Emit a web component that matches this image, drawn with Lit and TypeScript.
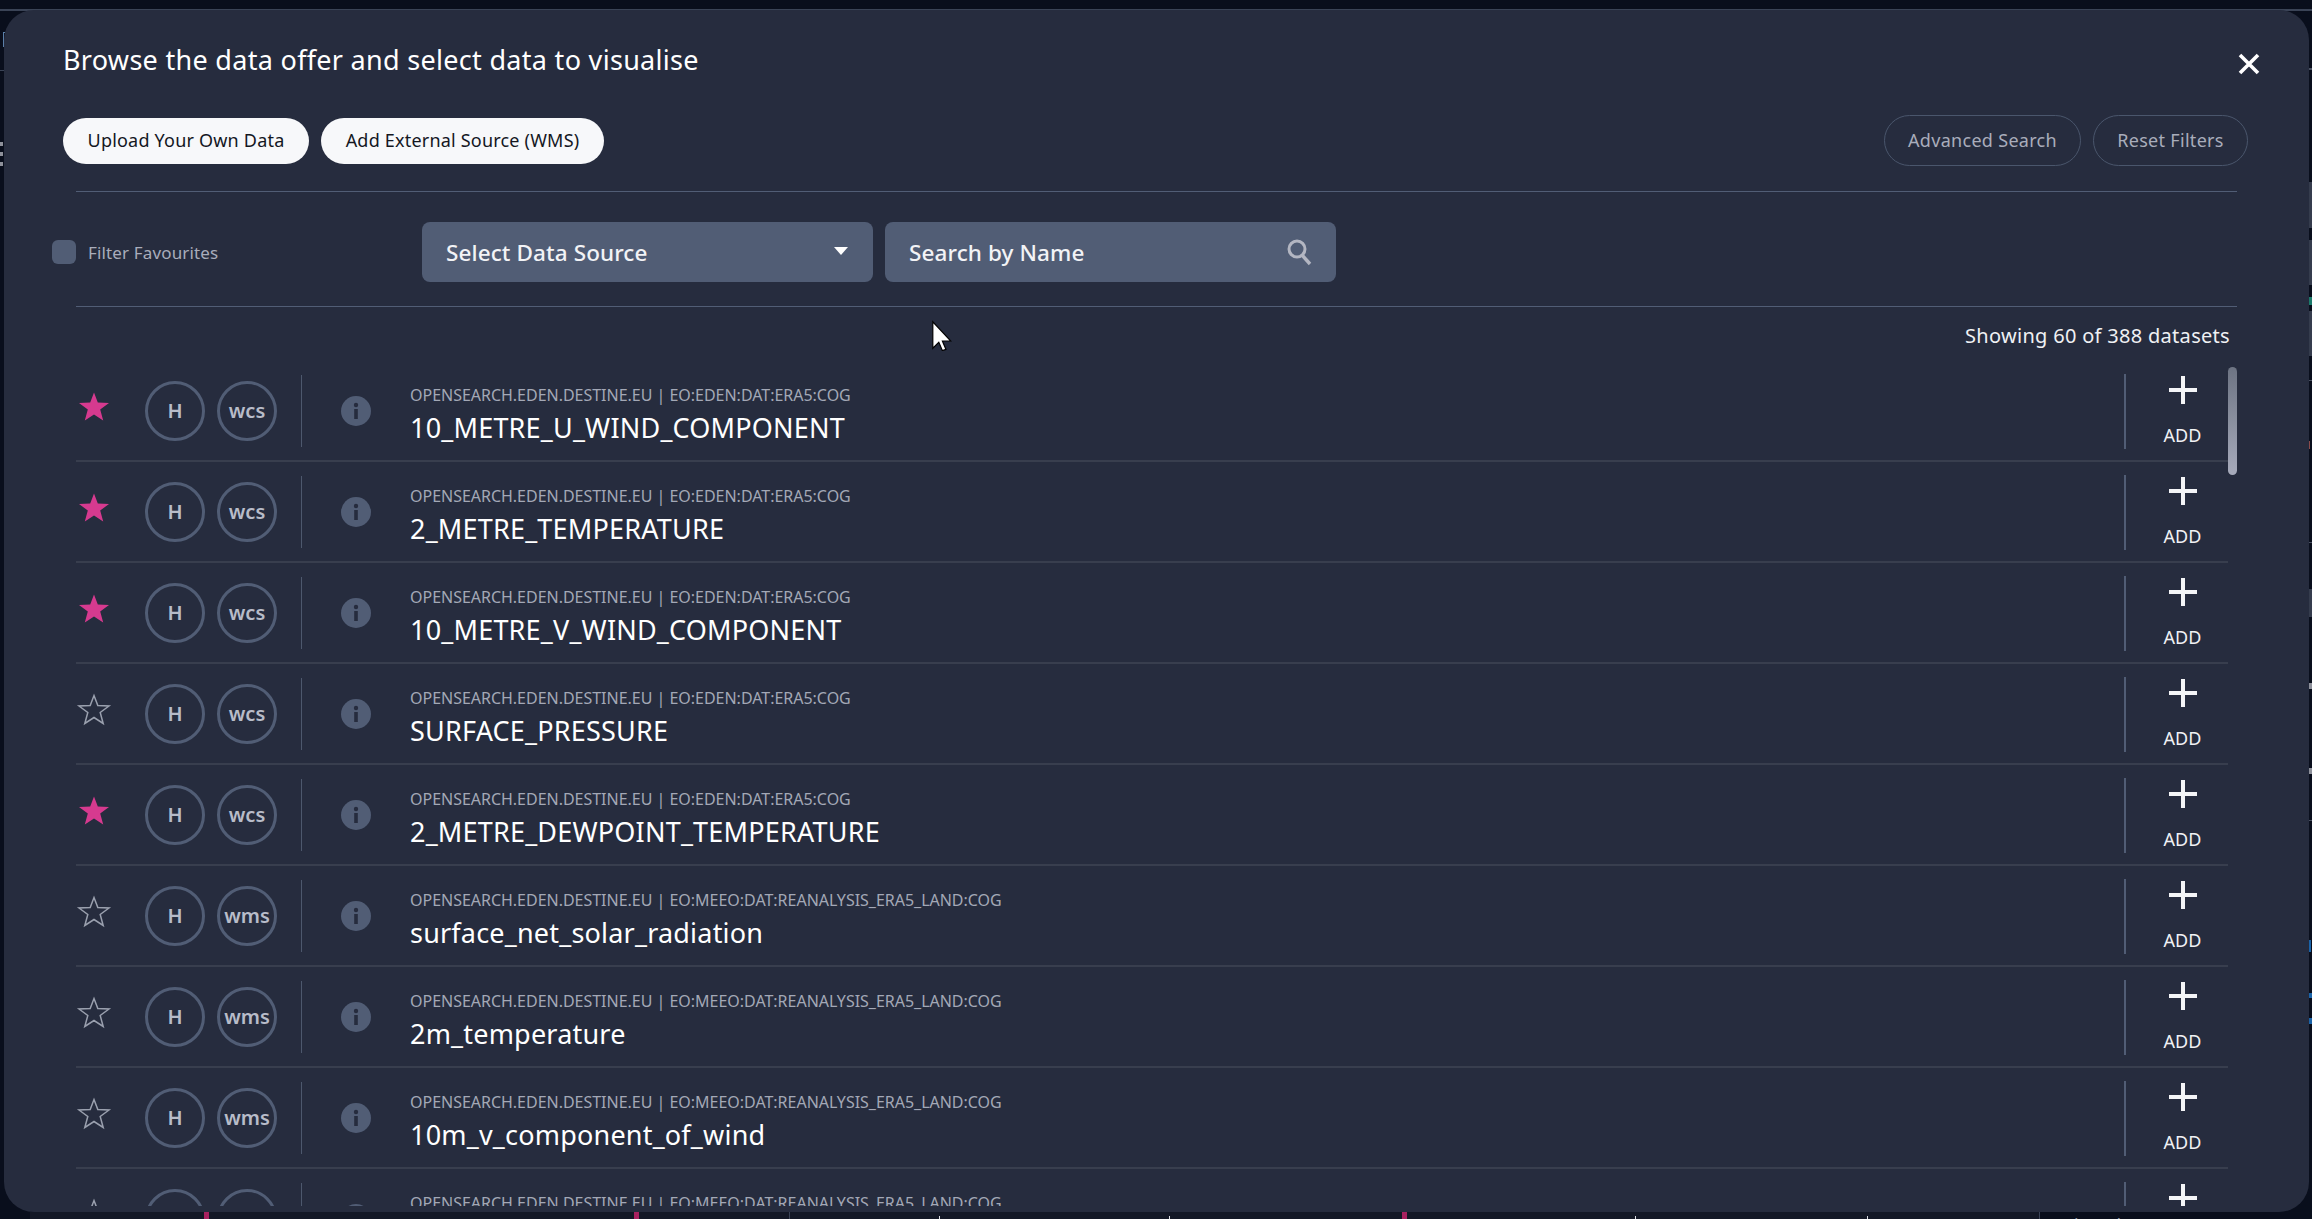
import { LitElement, html, css, svg } from "lit";
import { customElement } from "lit/decorators.js";

const ERA = "OPENSEARCH.EDEN.DESTINE.EU | EO:EDEN:DAT:ERA5:COG";
const LAND = "OPENSEARCH.EDEN.DESTINE.EU | EO:MEEO:DAT:REANALYSIS_ERA5_LAND:COG";
const rows = [
  { src: ERA, name: "10_METRE_U_WIND_COMPONENT", fav: true, kind: "wcs" },
  { src: ERA, name: "2_METRE_TEMPERATURE", fav: true, kind: "wcs" },
  { src: ERA, name: "10_METRE_V_WIND_COMPONENT", fav: true, kind: "wcs" },
  { src: ERA, name: "SURFACE_PRESSURE", fav: false, kind: "wcs" },
  { src: ERA, name: "2_METRE_DEWPOINT_TEMPERATURE", fav: true, kind: "wcs" },
  { src: LAND, name: "surface_net_solar_radiation", fav: false, kind: "wms" },
  { src: LAND, name: "2m_temperature", fav: false, kind: "wms" },
  { src: LAND, name: "10m_v_component_of_wind", fav: false, kind: "wms" },
  { src: LAND, name: "10m_u_component_of_wind", fav: false, kind: "wms" },
];

const bits: [number, number, number, number, string][] = [
  [0, 9, 2312, 2, "#3a4356"], [0, 70, 4, 1, "#3a4356"],
  [0, 142, 3, 4, "#8d909a"], [0, 152, 3, 4, "#8d909a"], [0, 162, 3, 4, "#8d909a"],
  [2309, 68, 3, 2, "#4a5162"], [2309, 182, 3, 46, "#353c4d"], [2309, 240, 3, 45, "#353c4d"],
  [2309, 297, 3, 8, "#1b7a6b"], [2309, 311, 3, 45, "#353c4d"], [2309, 380, 3, 1, "#4a5162"],
  [2309, 441, 1, 8, "#8a4a4a"], [2309, 542, 3, 1, "#4a5162"], [2309, 589, 3, 28, "#353c4d"],
  [2309, 683, 3, 6, "#8d909a"], [2309, 768, 3, 6, "#8d909a"], [2309, 820, 3, 1, "#4a5162"],
  [2309, 940, 2, 12, "#1a63a8"], [2309, 993, 3, 5, "#1a63a8"], [2309, 1018, 3, 6, "#1a63a8"],
  [30, 1212, 2009, 7, "#131826"], [204, 1212, 5, 7, "#a8215f"], [634, 1212, 5, 7, "#a8215f"],
  [1402, 1212, 5, 7, "#a8215f"], [789, 1212, 1, 7, "#3a4356"], [2039, 1212, 1, 7, "#3a4356"],
  [939, 1216, 1, 3, "#d8dae0"], [1169, 1216, 1, 3, "#d8dae0"], [1635, 1216, 1, 3, "#d8dae0"],
  [1867, 1216, 1, 3, "#d8dae0"],
];

const starPath = "M15 1.5 L18.8 11.5 L30 12 L21.2 18.5 L24.2 29.5 L15 23.5 L5.8 29.5 L8.8 18.5 L0 12 L11.2 11.5 Z";

@customElement("app-root")
export class AppRoot extends LitElement {
  static styles = css`
    :host { display: block; position: relative; width: 2312px; height: 1219px; overflow: hidden;
      background: #090e1c; font-family: "Noto Sans", sans-serif; color: #fff; }
    .bit { position: absolute; }
    .bracket { position: absolute; left: 3px; top: 32px; width: 5px; height: 13px; border: 1px solid #5b7fa8; border-right: 0; }
    .minval { position: absolute; left: 2057px; top: 1214px; font-size: 18px; line-height: 22px; letter-spacing: 0.6px; color: #8d93a3; white-space: nowrap; }
    .modal { position: relative; box-sizing: border-box; margin: 10px 3px 0 4px; height: 1202px; border-radius: 30px;
      background: #262c3e; overflow: hidden; display: flex; flex-direction: column; padding-bottom: 6px; }
    .head { height: 105px; flex: none; display: flex; justify-content: space-between; align-items: center;
      padding: 0 49px 0 59px; box-sizing: border-box; }
    .title { font-size: 27px; line-height: 34px; margin-top: -6px; letter-spacing: 0.3px; }
    .close { width: 22px; height: 22px; display: block; margin-top: 2px; }
    .actions { height: 51px; flex: none; display: flex; justify-content: space-between; align-items: center; padding: 0 61px 0 59px; }
    .group { display: flex; gap: 12px; }
    .pill { height: 46px; box-sizing: border-box; border-radius: 23px; background: #f7f8fa; color: #14171f; padding-bottom: 2px;
      font-size: 18px; letter-spacing: 0.2px; display: flex; align-items: center; justify-content: center; white-space: nowrap; }
    .p1 { width: 246px; } .p2 { width: 283px; }
    .ghost { height: 51px; border-radius: 26px; border: 1px solid #4a566c; background: none; color: #a9adbb; letter-spacing: 0.3px; }
    .g1 { width: 197px; } .g2 { width: 155px; }
    .rule { height: 1px; flex: none; margin: 25px 72px 0 72px; background: #515d75; }
    .filters { height: 114px; box-sizing: border-box; flex: none; display: flex; align-items: center; padding: 6px 0 0 48px; }
    .fav { width: 370px; flex: none; display: flex; align-items: center; gap: 12px; font-size: 17px; color: #a9adbb; letter-spacing: 0.15px; }
    .check { width: 24px; height: 24px; border-radius: 6px; background: #515d75; }
    .field { width: 451px; height: 60px; box-sizing: border-box; border-radius: 8px; background: #515d75; display: flex;
      align-items: center; justify-content: space-between; padding: 0 24px; font-size: 22.5px; font-weight: 500; letter-spacing: 0.1px; color: #f2f3f6; }
    .field + .field { margin-left: 12px; }
    .tri { width: 14px; height: 8px; display: block; margin: -3px 1px 0 0; }
    .mag { width: 28px; height: 28px; display: block; margin-right: -1px; }
    .rule2 { margin-top: 0; }
    .count { height: 53px; flex: none; box-sizing: border-box; padding: 16px 79px 0 0; text-align: right; font-size: 20px; line-height: 26px; color: #f0f1f4; letter-spacing: 0.3px; }
    .listwrap { position: relative; flex: 1; margin: 1px 72px 0 72px; overflow: hidden; }
    .row { height: 101px; box-sizing: border-box; margin-right: 9px; border-bottom: 2px solid #383e4e; display: flex; align-items: center; }
    .star { width: 30px; height: 30px; display: block; flex: none; margin: -10px 36px 0 3px; overflow: visible; }
    .badge { width: 60px; height: 60px; box-sizing: border-box; flex: none; border: 3px solid #515d75; border-radius: 50%; display: flex;
      align-items: center; justify-content: center; color: #b8bcc9; font-weight: 600; font-size: 20px; padding-bottom: 1px; }
    .badge + .badge { margin-left: 12px; }
    .vr { width: 1px; height: 72px; flex: none; background: #4d586d; margin: 1px 39px 0 24px; }
    .info { width: 30px; height: 30px; flex: none; display: block; margin: 1px 39px 0 0; }
    .text { flex: 1; min-width: 0; margin-top: 9px; }
    .src { font-size: 16px; line-height: 22px; color: #a3a8b6; letter-spacing: -0.02px; white-space: nowrap; }
    .name { font-size: 27px; line-height: 36px; margin-top: 4px; color: #fff; letter-spacing: 0.2px; white-space: nowrap; }
    .add { width: 104px; height: 75px; flex: none; box-sizing: border-box; border-left: 2px solid #515d75; padding-left: 11px; margin-top: 1px;
      display: flex; flex-direction: column; align-items: center; }
    .plus { width: 28px; height: 28px; display: block; margin-top: 2px; }
    .addl { font-size: 18px; line-height: 24px; margin-top: 19px; color: #f0f1f4; }
    .thumb { position: absolute; right: 0; top: 6px; width: 9px; height: 108px; border-radius: 5px; background: linear-gradient(#6d7483, #a7abbb); }
    .cursor { position: absolute; left: 928px; top: 311px; width: 24px; height: 40px; display: block; }
  `;

  render() {
    return html`
      ${bits.map(([x, y, w, h, c]) => html`<div class="bit" style="left:${x}px;top:${y}px;width:${w}px;height:${h}px;background:${c}"></div>`)}
      <div class="bracket"></div>
      <div class="minval">Min value: 275.74450120189707</div>
      <div class="modal">
        <div class="head">
          <div class="title">Browse the data offer and select data to visualise</div>
          <svg class="close" viewBox="0 0 22 22"><path d="M2 2 L20 20 M20 2 L2 20" stroke="#fff" stroke-width="3.6" fill="none"/></svg>
        </div>
        <div class="actions">
          <div class="group">
            <div class="pill p1">Upload Your Own Data</div>
            <div class="pill p2">Add External Source (WMS)</div>
          </div>
          <div class="group">
            <div class="pill ghost g1">Advanced Search</div>
            <div class="pill ghost g2">Reset Filters</div>
          </div>
        </div>
        <div class="rule"></div>
        <div class="filters">
          <div class="fav"><div class="check"></div>Filter Favourites</div>
          <div class="field">Select Data Source
            <svg class="tri" viewBox="0 0 14 8"><path d="M0 0 H14 L7 8 Z" fill="#fff"/></svg>
          </div>
          <div class="field">Search by Name
            <svg class="mag" viewBox="0 0 28 28"><circle cx="12" cy="11" r="8" stroke="#b3b6c2" stroke-width="3" fill="none"/><path d="M17 17 L25 26" stroke="#b3b6c2" stroke-width="3.4" fill="none"/></svg>
          </div>
        </div>
        <div class="rule rule2"></div>
        <div class="count">Showing 60 of 388 datasets</div>
        <div class="listwrap">
          ${rows.map((r) => html`
            <div class="row">
              <svg class="star" viewBox="0 0 30 30">${r.fav
                ? svg`<path d=${starPath} fill="#d63a8f"/>`
                : svg`<path d=${starPath} fill="none" stroke="#9aa0ae" stroke-width="1.5"/>`}</svg>
              <div class="badge">H</div>
              <div class="badge">${r.kind}</div>
              <div class="vr"></div>
              <svg class="info" viewBox="0 0 30 30"><circle cx="15" cy="15" r="15" fill="#515d75"/><circle cx="15" cy="9" r="2.2" fill="#262c3e"/><rect x="13.2" y="13" width="3.6" height="10" fill="#262c3e"/></svg>
              <div class="text"><div class="src">${r.src}</div><div class="name">${r.name}</div></div>
              <div class="add">
                <svg class="plus" viewBox="0 0 28 28"><path d="M14 0 V28 M0 14 H28" stroke="#f4f5f7" stroke-width="4" fill="none"/></svg>
                <div class="addl">ADD</div>
              </div>
            </div>`)}
          <div class="thumb"></div>
        </div>
      </div>
      <svg class="cursor" viewBox="0 0 20 33.3"><path d="M4 9 V31 L9 26 L12 33 L15 32 L12 25 L19 25 Z" fill="#fff" stroke="#000" stroke-width="1"/></svg>
    `;
  }
}
